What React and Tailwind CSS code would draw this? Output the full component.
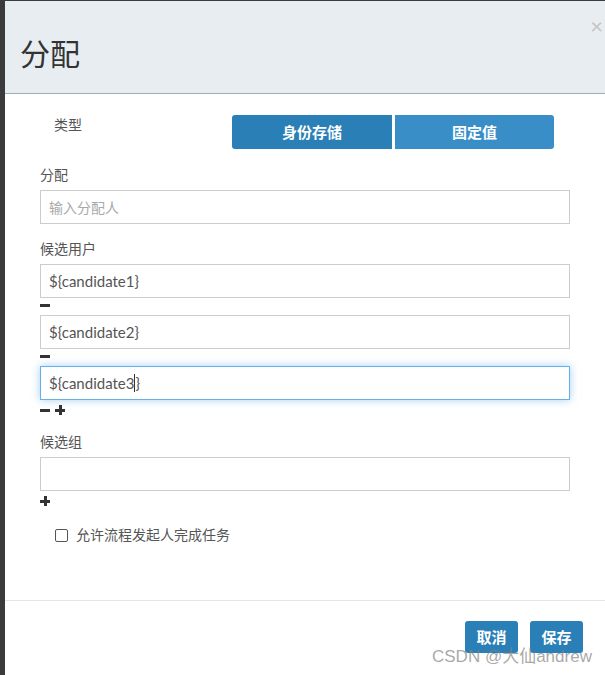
import React from "react";

const FONT = { fontFamily: '"Lato", "Noto Sans CJK SC", sans-serif' };

function Minus() {
  return <span className="inline-block w-[10px] h-[3px] bg-[#333]" />;
}
function Plus() {
  return (
    <span className="relative inline-block w-[10px] h-[10px]">
      <span className="absolute left-0 top-[3.5px] w-[10px] h-[3px] bg-[#333]" />
      <span className="absolute top-0 left-[3.5px] w-[3px] h-[10px] bg-[#333]" />
    </span>
  );
}

function Field({ children, focused }) {
  return (
    <div
      className={
        "h-[34px] border flex items-center px-[8px] text-[15px] text-[#555] bg-white " +
        (focused
          ? "border-[#66afe9] shadow-[0_0_8px_rgba(102,175,233,0.6)]"
          : "border-[#cccccc]")
      }
    >
      {children}
    </div>
  );
}

export default function App() {
  return (
    <div
      className="relative w-[605px] h-[675px] bg-[#3b3b3b] pl-[5px] pt-[1px] overflow-hidden"
      style={FONT}
    >
      <div className="bg-white h-full flex flex-col">
        {/* header */}
        <div className="relative h-[93px] bg-[#e8edf1] border-b border-[#a3acb5] pl-[15px] pt-[35px]">
          <div className="text-[30px] leading-[34px] text-[#333]">分配</div>
          <div className="absolute right-[2px] top-[14px] text-[22px] leading-[22px] text-[#c4c4c4]">×</div>
        </div>

        {/* body */}
        <div className="px-[35px] pt-[21px] flex-1">
          <div className="flex h-[34px]">
            <div className="w-[192px] pl-[14px] pt-[0px] text-[14px] leading-[20px] text-[#555]">类型</div>
            <div className="flex gap-[3px]">
              <div className="w-[160px] h-[34px] rounded-l-[3px] bg-[#2b7fb7] text-white font-bold text-[15px] flex items-center justify-center">
                身份存储
              </div>
              <div className="w-[159px] h-[34px] rounded-r-[3px] bg-[#3a8ec7] text-white font-bold text-[15px] flex items-center justify-center">
                固定值
              </div>
            </div>
          </div>

          <div className="mt-[16px] text-[14px] leading-[20px] text-[#555]">分配</div>
          <div className="mt-[5px]">
            <Field>
              <span className="text-[#a9a9a9] text-[14px]">输入分配人</span>
            </Field>
          </div>

          <div className="mt-[15px] text-[14px] leading-[20px] text-[#555]">候选用户</div>
          <div className="mt-[5px]">
            <Field>{"${candidate1}"}</Field>
            <div className="h-[17px] flex items-start pt-[6px]"><Minus /></div>
            <Field>{"${candidate2}"}</Field>
            <div className="h-[17px] flex items-start pt-[6px]"><Minus /></div>
            <Field focused>
              {"${candidate3"}
              <span className="inline-block w-px h-[18px] bg-[#333]" />
              {"}"}
            </Field>
            <div className="h-[17px] flex items-start gap-[5px] pt-[5px]">
              <span className="mt-[3.5px] flex"><Minus /></span>
              <Plus />
            </div>
          </div>

          <div className="mt-[15px] text-[14px] leading-[20px] text-[#555]">候选组</div>
          <div className="mt-[5px]">
            <Field />
            <div className="h-[17px] flex items-start pt-[5px]"><Plus /></div>
          </div>

          <div className="mt-[20px] flex items-center pl-[15px] h-[14px]">
            <span className="inline-block w-[13px] h-[13px] border border-[#555] rounded-[2px] bg-white" />
            <span className="ml-[8px] text-[14px] leading-[20px] text-[#555]">允许流程发起人完成任务</span>
          </div>
        </div>

        {/* footer */}
        <div className="border-t border-[#e5e5e5] h-[75px] flex justify-end items-start pt-[20px] pr-[22px] gap-[12px]">
          <div className="w-[53px] h-[32px] rounded-[3px] bg-[#2b7fb7] text-white font-bold text-[15px] flex items-center justify-center">
            取消
          </div>
          <div className="w-[53px] h-[32px] rounded-[3px] bg-[#2b7fb7] text-white font-bold text-[15px] flex items-center justify-center">
            保存
          </div>
        </div>
      </div>

      <div
        className="absolute left-[432px] top-[646px] text-[17px] leading-[22px] text-[rgba(130,130,130,0.7)]"
        style={{ fontFamily: '"Liberation Sans", "Noto Sans CJK SC", sans-serif' }}
      >
        CSDN @大仙andrew
      </div>
    </div>
  );
}
